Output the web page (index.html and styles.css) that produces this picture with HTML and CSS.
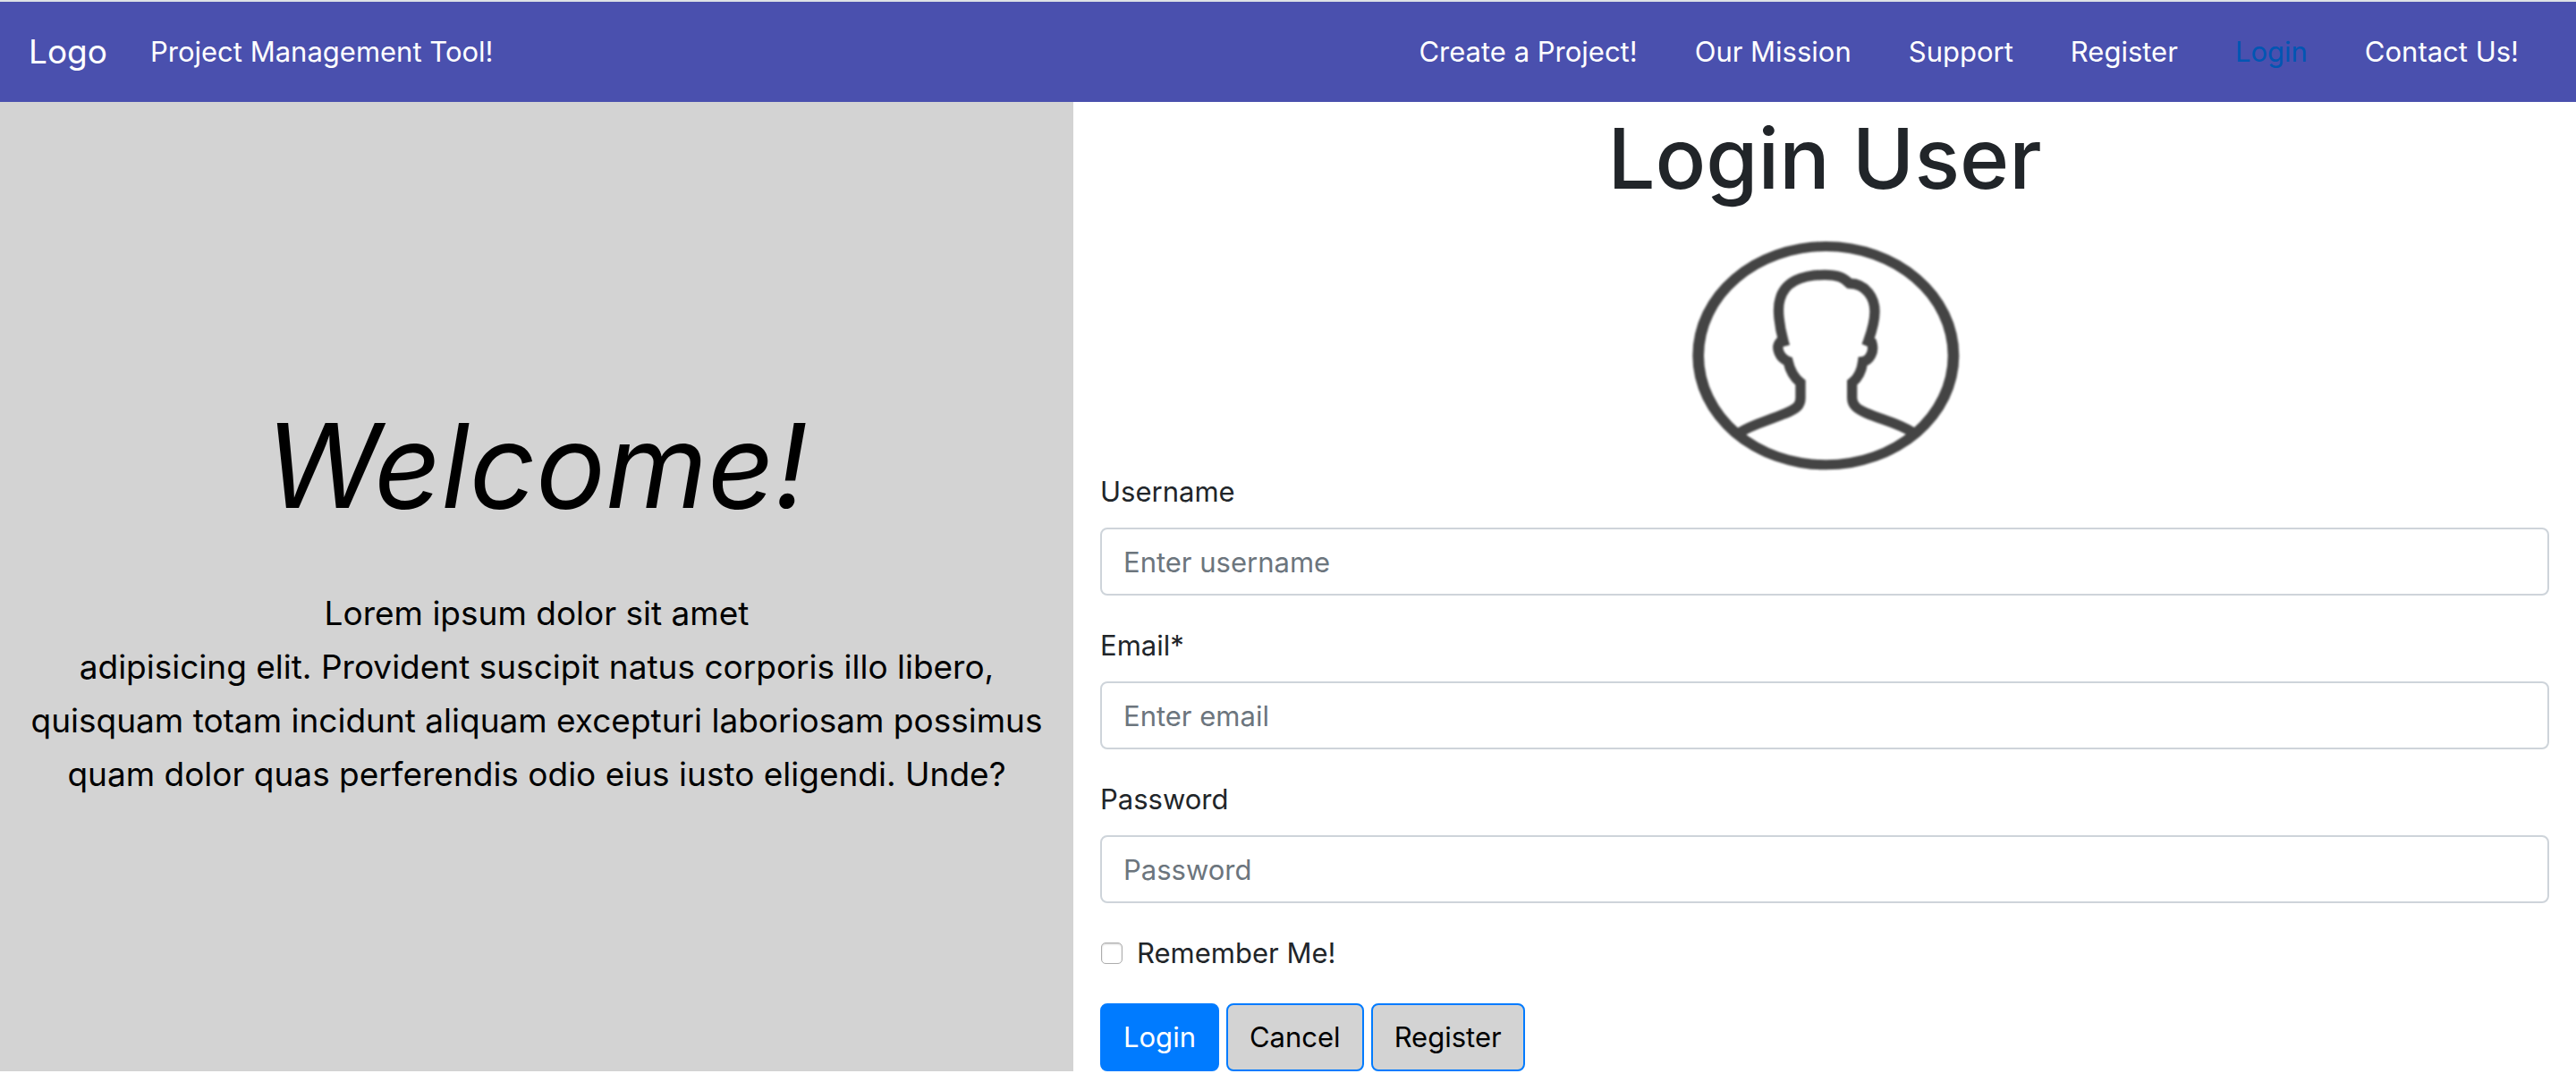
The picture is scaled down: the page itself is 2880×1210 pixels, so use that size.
FILE: index.html
```html
<!DOCTYPE html>
<html lang="en">
<head>
<meta charset="utf-8">
<meta name="viewport" content="width=device-width, initial-scale=1">
<title>Login User</title>
<link rel="stylesheet" href="styles.css">
</head>
<body>
<nav class="navbar">
  <a class="brand" href="#">Logo</a>
  <a class="tagline" href="#">Project Management Tool!</a>
  <ul class="nav-links">
    <li><a href="#">Create a Project!</a></li>
    <li><a href="#">Our Mission</a></li>
    <li><a href="#">Support</a></li>
    <li><a href="#">Register</a></li>
    <li><a class="active" href="#">Login</a></li>
    <li><a href="#">Contact Us!</a></li>
  </ul>
</nav>
<div class="content">
  <section class="welcome">
    <h2>Welcome!</h2>
    <p>Lorem ipsum dolor sit amet<br>adipisicing elit. Provident suscipit natus corporis illo libero, quisquam totam incidunt aliquam excepturi laboriosam possimus quam dolor quas perferendis odio eius iusto eligendi. Unde?</p>
  </section>
  <main class="login">
    <h1>Login User</h1>
    <svg class="avatar" viewBox="330 468 900 780" role="img" aria-label="User">
      <path class="ring" fill-rule="evenodd" d="M337 863A447 383 0 0 1 1231 863A447 383 0 0 1 337 863ZM375 863A409 350 0 0 0 1193 863A409 350 0 0 0 375 863Z"/>
      <path class="figure" d="M490 1124C540 1092 590 1082 645 1058C690 1040 699 1028 699 1005V954C675 935 662 905 657 882C628 872 615 835 630 818L642 815C628 765 620 705 630 675C645 615 705 592 780 592C825 592 845 602 863 621C920 622 948 670 948 715C948 752 935 790 926 815L938 820C948 850 930 880 908 883C904 915 890 940 872 954V1005C872 1030 890 1043 920 1056C970 1078 1025 1088 1078 1122"/>
    </svg>
    <form class="login-form">
      <div class="field">
        <label for="username">Username</label>
        <input type="text" id="username" placeholder="Enter username">
      </div>
      <div class="field">
        <label for="email">Email*</label>
        <input type="email" id="email" placeholder="Enter email">
      </div>
      <div class="field">
        <label for="password">Password</label>
        <input type="password" id="password" placeholder="Password">
      </div>
      <div class="check">
        <input type="checkbox" id="remember">
        <label for="remember">Remember Me!</label>
      </div>
      <div class="actions">
        <button class="btn primary" type="submit">Login</button>
        <button class="btn" type="button">Cancel</button>
        <button class="btn" type="button">Register</button>
      </div>
    </form>
  </main>
</div>
</body>
</html>
```
FILE: styles.css
```css
* { box-sizing: border-box; }

body {
  margin: 0;
  border-top: 2px solid #dee2e6;
  background: #fff;
  color: #212529;
  font-family: Inter, "Liberation Sans", sans-serif;
  font-size: 31px;
  line-height: 48px;
}

h1, h2, p, ul { margin: 0; padding: 0; }

a { color: #fff; text-decoration: none; }

.navbar {
  display: flex;
  align-items: center;
  min-height: 112px;
  padding: 0 32px;
  background: #4a50ae;
}

.brand { font-size: 37px; }

.tagline { margin-left: 48px; }

.nav-links {
  display: flex;
  gap: 64px;
  margin-left: auto;
  padding-right: 32px;
  list-style: none;
}

.nav-links .active { color: #0056b3; }

.content {
  display: grid;
  grid-template-columns: 5fr 7fr;
}

.welcome {
  display: flex;
  flex-direction: column;
  justify-content: center;
  gap: 30px;
  padding: 0 24px;
  background: #d3d3d3;
  color: #000;
  text-align: center;
}

.welcome h2 {
  font-size: 130px;
  font-style: italic;
  font-weight: 400;
  line-height: 210px;
}

.welcome p {
  font-size: 37px;
  line-height: 60px;
}

.login {
  display: flex;
  flex-direction: column;
  padding: 0 30px;
}

.login h1 {
  font-size: 94px;
  font-weight: 500;
  line-height: 126px;
  text-align: center;
}

.avatar {
  align-self: center;
  width: 300px;
  height: 260px;
  margin-top: 26px;
  overflow: visible;
  filter: blur(1px);
}

.ring { fill: #444; }

.figure {
  fill: none;
  stroke: #444;
  stroke-width: 34;
}

.field { margin-bottom: 32px; }

.field label {
  display: block;
  margin-bottom: 16px;
}

.field input {
  display: block;
  width: 100%;
  height: 76px;
  padding: 12px 24px;
  border: 2px solid #ced4da;
  border-radius: 8px;
  background: #fff;
  color: #495057;
  font: inherit;
}

.field input::placeholder { color: #6c757d; opacity: 1; }

.check {
  display: flex;
  align-items: center;
  gap: 16px;
  margin-bottom: 32px;
}

.check input {
  appearance: none;
  width: 24px;
  height: 24px;
  margin: 0 0 0 1px;
  border: 1px solid #adadad;
  border-radius: 5px;
  background: #fff;
  box-shadow: inset 0 1px 2px #ccc;
}

.actions { display: flex; gap: 8px; }

.btn {
  height: 76px;
  padding: 12px 24px;
  border: 2px solid #007bff;
  border-radius: 8px;
  background: #d3d3d3;
  color: #000;
  font: inherit;
}

.btn.primary { background: #007bff; color: #fff; }
```
